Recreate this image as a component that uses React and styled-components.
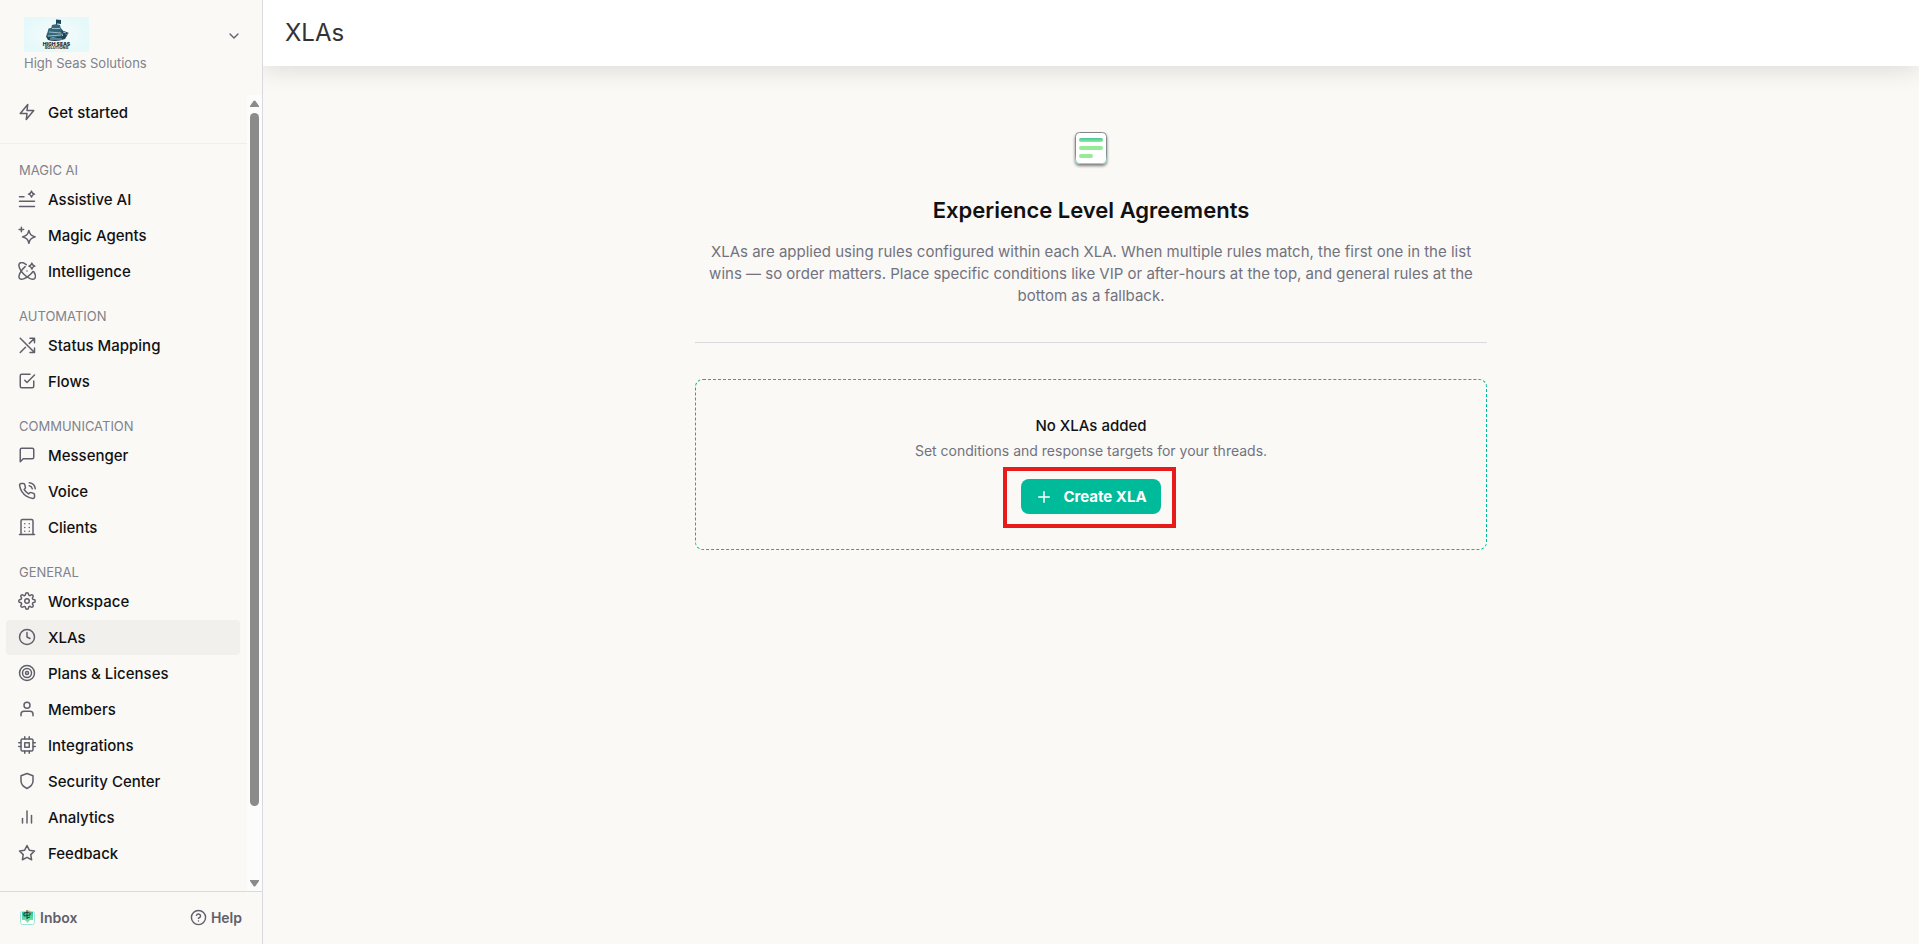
import React from "react";
import styled, { createGlobalStyle } from "styled-components";
import {
  FiZap,
  FiCheckSquare,
  FiMessageSquare,
  FiPhoneCall,
  FiSettings,
  FiClock,
  FiTarget,
  FiUser,
  FiCpu,
  FiShield,
  FiBarChart2,
  FiStar,
  FiHelpCircle,
  FiChevronDown,
  FiPlus,
} from "react-icons/fi";

const GlobalStyle = createGlobalStyle`
  * { box-sizing: border-box; }
  body {
    margin: 0;
    background: #faf9f6;
    color: #111113;
    font-family: Inter, "Liberation Sans", sans-serif;
    font-size: 15px;
  }
  h1, h2, h3, p, ul { margin: 0; padding: 0; }
  ul { list-style: none; }
  button { font: inherit; border: 0; padding: 0; background: none; color: inherit; cursor: pointer; }
`;

const Layout = styled.div`
  display: flex;
  height: 100vh;
`;

const Sidebar = styled.aside`
  display: flex;
  flex-direction: column;
  flex: none;
  width: 263px;
  border-right: 1px solid #d9d9e0;
`;

const WorkspaceSwitcher = styled.button`
  display: flex;
  justify-content: space-between;
  align-items: center;
  flex: none;
  padding: 17px 20px 24px 24px;
  text-align: left;
  color: #60606c;
`;

const Brand = styled.span`
  display: flex;
  flex-direction: column;
  gap: 3px;
`;

const BrandName = styled.span`
  font-size: 13px;
  line-height: 16px;
  color: #80828d;
`;

const SwitcherArrow = styled.span`
  display: flex;
  padding-bottom: 16px;
`;

const ScrollArea = styled.div`
  display: flex;
  flex: 1;
  min-height: 0;
`;

const Nav = styled.nav`
  flex: 1;
  min-width: 0;
  overflow: hidden;
`;

const NavGroup = styled.section`
  padding: 0 7px 0 6px;
  & + & { padding-top: 14px; }
  &:first-child {
    height: 49px;
    border-bottom: 1px solid #f0efec;
  }
`;

const GroupTitle = styled.h3`
  font-size: 13px;
  font-weight: 400;
  line-height: 24px;
  padding-left: 13px;
  color: #80828d;
`;

const NavItem = styled.a`
  display: flex;
  align-items: center;
  gap: 12px;
  height: 35px;
  margin-bottom: 1px;
  padding: 0 0 1px 12px;
  border-radius: 4px;
  background: ${(p) => (p.$active ? "#f1f0ed" : "transparent")};
  color: #111113;
  font-weight: 500;
  text-decoration: none;
  svg { flex: none; color: #60606c; }
`;

const ScrollBar = styled.div`
  display: flex;
  flex-direction: column;
  align-items: center;
  flex: none;
  width: 15px;
  padding: 5px 0 4px;
  background: #fcfcfc;
`;

const ScrollTrack = styled.div`
  display: flex;
  flex-direction: column;
  flex: 1;
  padding: 6px 0;
`;

const ScrollThumb = styled.div`
  width: 9px;
  height: 91%;
  border-radius: 5px;
  background: #8b8b8b;
`;

const SidebarFooter = styled.footer`
  display: flex;
  justify-content: space-between;
  align-items: center;
  flex: none;
  height: 53px;
  padding: 0 20px 2px 19px;
  border-top: 1px solid #d9d9e0;
`;

const FooterLink = styled.a`
  display: flex;
  align-items: center;
  gap: 4px;
  font-size: 14px;
  font-weight: 600;
  color: #60606c;
  text-decoration: none;
`;

const Main = styled.main`
  display: flex;
  flex-direction: column;
  flex: 1;
  min-width: 0;
`;

const PageHeader = styled.header`
  display: flex;
  align-items: center;
  height: 66px;
  padding: 0 22px 2px;
  background: #fff;
  box-shadow: 0 4px 24px rgba(0, 0, 0, 0.12);
  clip-path: inset(0 0 -40px 0);
`;

const PageTitle = styled.h1`
  font-size: 24px;
  font-weight: 400;
  color: #333;
`;

const Content = styled.div`
  display: flex;
  flex-direction: column;
  width: 100%;
  max-width: 792px;
  margin: 0 auto;
  padding-top: 62px;
`;

const Intro = styled.section`
  display: flex;
  flex-direction: column;
  align-items: center;
  padding-bottom: 35px;
  border-bottom: 1px solid #d9d9e0;
  text-align: center;
`;

const IntroTitle = styled.h2`
  margin: 20px 0 17px;
  font-size: 22px;
  font-weight: 600;
  line-height: 28px;
`;

const IntroText = styled.p`
  line-height: 22px;
  color: #72727e;
`;

const EmptyState = styled.section`
  display: flex;
  flex-direction: column;
  align-items: center;
  margin-top: 36px;
  padding: 34px 16px 35px;
  border: 1px dashed #00bb9a;
  border-radius: 8px;
`;

const EmptyTitle = styled.h3`
  font-size: 15px;
  font-weight: 500;
  line-height: 24px;
`;

const EmptyText = styled.p`
  margin: 1px 0 16px;
  font-size: 14px;
  line-height: 24px;
  color: #72727e;
`;

const Highlight = styled.div`
  position: relative;
  &::after {
    content: "";
    position: absolute;
    inset: -12px -15px -14px -18px;
    border: 4px solid #e81b1b;
    pointer-events: none;
  }
`;

const CreateButton = styled.button`
  display: flex;
  align-items: center;
  gap: 10px;
  height: 35px;
  padding: 0 14px;
  border-radius: 8px;
  background: #00bb9a;
  color: #fff;
  font-weight: 700;
`;

const StrokeIcon = ({ children, size = 18 }) => (
  <svg
    width={size}
    height={size}
    viewBox="0 0 24 24"
    fill="none"
    stroke="currentColor"
    strokeWidth="2"
    strokeLinecap="round"
    strokeLinejoin="round"
    aria-hidden="true"
  >
    {children}
  </svg>
);

const AssistIcon = () => (
  <StrokeIcon>
    <path d="M2 9h6M2 15h20M2 22h20M18 1.500c.6 2.400 1.600 3.400 4 4-2.400.6-3.400 1.600-4 4-.6-2.400-1.600-3.400-4-4 2.400-.6 3.400-1.600 4-4z" />
  </StrokeIcon>
);

const AgentsIcon = () => (
  <StrokeIcon>
    <path d="M14.500 6c1.300 5.300 3 7 8.500 8.500-5.500 1.500-7.200 3.200-8.500 8.500-1.300-5.300-3-7-8.500-8.500 5.500-1.500 7.200-3.200 8.500-8.500z" />
    <path d="M4.500 1.500v6M1.500 4.500h6" />
  </StrokeIcon>
);

const IntelligenceIcon = () => (
  <StrokeIcon>
    <path d="M11 3.500C7.500.8 3.800.2 2.200 1.800-.3 4.300 2.300 10.800 7.800 16.300s12 8.100 14.500 5.600c1.600-1.600 1.100-5.100-1.200-8.900" />
    <path d="M9.500 6.200C3 11.700-.3 19.400 2.200 21.900s9 0 14.500-5.600c1.200-1.200 2.300-2.500 3.200-3.700" />
    <path d="M18.500 1.500c.6 2.400 1.600 3.400 4 4-2.400.6-3.400 1.600-4 4-.6-2.400-1.600-3.400-4-4 2.400-.6 3.400-1.600 4-4zM12 12h.01" />
  </StrokeIcon>
);

const MappingIcon = () => (
  <StrokeIcon>
    <path d="M3 3l18 18M16 22h6v-6M16 3h6v6M21.500 3.500L15 10M10 15l-7 7" />
  </StrokeIcon>
);

const BuildingIcon = () => (
  <StrokeIcon>
    <path d="M2 22h20M4 22V4a2 2 0 0 1 2-2h12a2 2 0 0 1 2 2v18M9 7.500h.01M15 7.500h.01M9 12.500h.01M15 12.500h.01M9 17.500h.01M15 17.500h.01" />
  </StrokeIcon>
);

const ShipLogo = () => (
  <svg width="65" height="35" viewBox="0 0 65 35" role="img" aria-label="High Seas Solutions logo">
    <defs>
      <radialGradient id="sky">
        <stop offset="0.3" stopColor="#f4fafb" />
        <stop offset="1" stopColor="#e6f9fa" />
      </radialGradient>
    </defs>
    <rect width="65" height="35" fill="url(#sky)" />
    <path d="M32 2.500l5 .5v4l-4-.5V9h-1z" fill="#1c4659" />
    <path d="M28 8q4-1.500 8 0l1 4h-10zM24.500 11.500q6-2 13 0l2 3.500-2 2H23zM23 16q8-2 14 0l2 4H22z" fill="#33687a" />
    <path d="M37 13l8 3-6 3M22 19.500l7 1 8-1 7-2.500-3 5q-9 3.500-17 1z" fill="#1d4557" />
    <path d="M28 11.500h8M25 15l12 1M24 19l13-1M39 15l3 1M26 22h12" stroke="#9dbcc5" fill="none" />
    <text x="32.500" y="28.500" fontSize="5" fontWeight="900" textAnchor="middle" fill="#173b4d">HIGH SEAS</text>
    <text x="32.500" y="32" fontSize="4" fontWeight="800" textAnchor="middle" fill="#173b4d">SOLUTIONS</text>
  </svg>
);

const InboxIcon = () => (
  <svg width="17" height="17" viewBox="0 0 17 17" aria-hidden="true">
    <defs>
      <linearGradient id="inbox" x2="0" y2="1">
        <stop stopColor="#20c5a2" />
        <stop offset="1" stopColor="#91e898" />
      </linearGradient>
    </defs>
    <rect x="1.500" y="2.500" width="14" height="13" rx="2" fill="#fff" stroke="#9fe4da" />
    <path d="M3 3h11v8h-3l-2.500 3L6 11H3z" fill="url(#inbox)" />
    <path d="M8 1v9M5 4l6-1v3l-6 1zM8 9l3-1" stroke="#263c36" fill="none" />
    <path d="M9 2h2v2" stroke="#e2b15b" fill="none" />
  </svg>
);

const AgreementIcon = () => (
  <svg width="48" height="48" viewBox="0 0 48 48" aria-hidden="true">
    <defs>
      <linearGradient id="bar" x2="0" y2="1">
        <stop stopColor="#43c69d" />
        <stop offset="1" stopColor="#90ee90" />
      </linearGradient>
      <linearGradient id="edge" x2="0" y2="1">
        <stop stopColor="#858789" />
        <stop offset="0.7" stopColor="#83928f" />
        <stop offset="1" stopColor="#8ad8ca" />
      </linearGradient>
      <filter id="drop" x="-20%" y="-20%" width="140%" height="150%">
        <feDropShadow dx="0" dy="2" stdDeviation="1.500" floodOpacity="0.5" />
      </filter>
    </defs>
    <rect x="8.500" y="4.500" width="31" height="31" rx="4" fill="#fff" stroke="url(#edge)" filter="url(#drop)" />
    <rect x="12" y="10" width="24" height="4" rx="2" fill="url(#bar)" />
    <rect x="12" y="18" width="24" height="4" rx="2" fill="#96ec96" />
    <rect x="12" y="26" width="14" height="4" rx="2" fill="#96ec96" />
  </svg>
);

const groups = [
  { items: [["Get started", FiZap]] },
  { title: "MAGIC AI", items: [["Assistive AI", AssistIcon], ["Magic Agents", AgentsIcon], ["Intelligence", IntelligenceIcon]] },
  { title: "AUTOMATION", items: [["Status Mapping", MappingIcon], ["Flows", FiCheckSquare]] },
  { title: "COMMUNICATION", items: [["Messenger", FiMessageSquare], ["Voice", FiPhoneCall], ["Clients", BuildingIcon]] },
  {
    title: "GENERAL",
    items: [
      ["Workspace", FiSettings],
      ["XLAs", FiClock],
      ["Plans & Licenses", FiTarget],
      ["Members", FiUser],
      ["Integrations", FiCpu],
      ["Security Center", FiShield],
      ["Analytics", FiBarChart2],
      ["Feedback", FiStar],
    ],
  },
];

export default function App() {
  return (
    <>
      <GlobalStyle />
      <Layout>
        <Sidebar>
          <WorkspaceSwitcher>
            <Brand>
              <ShipLogo />
              <BrandName>High Seas Solutions</BrandName>
            </Brand>
            <SwitcherArrow>
              <FiChevronDown size={16} />
            </SwitcherArrow>
          </WorkspaceSwitcher>
          <ScrollArea>
            <Nav>
              {groups.map((group, i) => (
                <NavGroup key={i}>
                  {group.title && <GroupTitle>{group.title}</GroupTitle>}
                  <ul>
                    {group.items.map(([label, Icon]) => (
                      <li key={label}>
                        <NavItem href="#" $active={label === "XLAs"}>
                          <Icon size={18} />
                          {label}
                        </NavItem>
                      </li>
                    ))}
                  </ul>
                </NavGroup>
              ))}
            </Nav>
            <ScrollBar aria-hidden="true">
              <svg width="9" height="7" viewBox="0 0 9 7">
                <path d="M3.500 1q1-1 2 0L9 6v1H0V6z" fill="#8b8b8b" />
              </svg>
              <ScrollTrack>
                <ScrollThumb />
              </ScrollTrack>
              <svg width="9" height="7" viewBox="0 0 9 7">
                <path d="M3.500 6q1 1 2 0L9 1V0H0v1z" fill="#8b8b8b" />
              </svg>
            </ScrollBar>
          </ScrollArea>
          <SidebarFooter>
            <FooterLink href="#">
              <InboxIcon />
              Inbox
            </FooterLink>
            <FooterLink href="#">
              <FiHelpCircle size={17} />
              Help
            </FooterLink>
          </SidebarFooter>
        </Sidebar>
        <Main>
          <PageHeader>
            <PageTitle>XLAs</PageTitle>
          </PageHeader>
          <Content>
            <Intro>
              <AgreementIcon />
              <IntroTitle>Experience Level Agreements</IntroTitle>
              <IntroText>
                XLAs are applied using rules configured within each XLA. When multiple rules match, the first one in
                the list wins — so order matters. Place specific conditions like VIP or after-hours at the top, and
                general rules at the bottom as a fallback.
              </IntroText>
            </Intro>
            <EmptyState>
              <EmptyTitle>No XLAs added</EmptyTitle>
              <EmptyText>Set conditions and response targets for your threads.</EmptyText>
              <Highlight>
                <CreateButton>
                  <FiPlus size={18} />
                  Create XLA
                </CreateButton>
              </Highlight>
            </EmptyState>
          </Content>
        </Main>
      </Layout>
    </>
  );
}
